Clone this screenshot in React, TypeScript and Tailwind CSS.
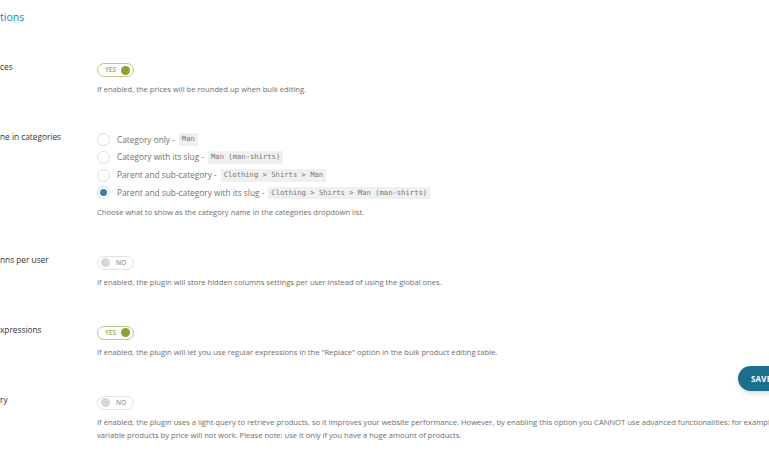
import React from 'react';

const font = { fontFamily: '"Open Sans", "Noto Sans", sans-serif' };

const Toggle: React.FC<{ on: boolean }> = ({ on }) =>
  on ? (
    <div className="flex h-[14px] w-[37px] items-center justify-between rounded-full border border-[#b9c98a] pl-[7px] pr-[3px]">
      <span className="text-[6.5px] font-semibold leading-none text-[#93a94a]">YES</span>
      <span className="h-[9px] w-[9px] rounded-full bg-[#8aa232]" />
    </div>
  ) : (
    <div className="flex h-[14px] w-[37px] items-center gap-[6px] rounded-full border border-[#e2e2e2] pl-[3px]">
      <span className="h-[9px] w-[9px] rounded-full bg-[#d6d6d6]" />
      <span className="text-[6.5px] font-semibold leading-none text-[#9a9a9a]">NO</span>
    </div>
  );

const Desc: React.FC<{ className?: string; children: React.ReactNode }> = ({ className, children }) => (
  <p className={`whitespace-nowrap text-[7.6px] leading-[13px] text-[#6d6d6d] ${className ?? 'mt-[6px]'}`}>{children}</p>
);

const Code: React.FC<{ children: React.ReactNode }> = ({ children }) => (
  <code className="ml-[4px] bg-[#f0f0f0] px-[3px] py-[1px] font-['DejaVu_Sans_Mono',monospace] text-[7.2px] text-[#777]">
    {children}
  </code>
);

const Radio: React.FC<{ checked?: boolean; label: string; code: string }> = ({ checked, label, code }) => (
  <div className="flex h-[17.7px] items-center">
    <span
      className={
        checked
          ? 'flex h-[13px] w-[13px] items-center justify-center rounded-full border border-[#d8d8d8] bg-white'
          : 'h-[13px] w-[13px] rounded-full border border-[#dcdcdc] bg-white'
      }
    >
      {checked && <span className="h-[7px] w-[7px] rounded-full bg-[#3a7ea0]" />}
    </span>
    <span className="ml-[7px] text-[8.3px] text-[#707070]">{label} -</span>
    <Code>{code}</Code>
  </div>
);

const Row: React.FC<{ label: string; className?: string; children: React.ReactNode }> = ({ label, className, children }) => (
  <div className={`flex ${className ?? ''}`}>
    <div className="w-[97px] shrink-0 -mt-[3px] text-[8.3px] leading-[14px] text-[#333]">{label}</div>
    <div className="flex flex-col">{children}</div>
  </div>
);

export default function App() {
  return (
    <div className="relative h-[452px] w-[769px] overflow-hidden bg-white" style={font}>
      <h2 className="pt-[10px] text-[10.5px] leading-[14px] text-[#1b85b8]">tions</h2>

      <Row label="ces" className="mt-[39px]">
        <Toggle on />
        <Desc>If enabled, the prices will be rounded up when bulk editing.</Desc>
      </Row>

      <Row label="ne in categories" className="mt-[37px]">
        <div className="-mt-[2px] flex flex-col">
          <Radio label="Category only" code="Man" />
          <Radio label="Category with its slug" code="Man (man-shirts)" />
          <Radio label="Parent and sub-category" code="Clothing > Shirts > Man" />
          <Radio checked label="Parent and sub-category with its slug" code="Clothing > Shirts > Man (man-shirts)" />
        </div>
        <Desc className="mt-[4px]">Choose what to show as the category name in the categories dropdown list.</Desc>
      </Row>

      <Row label="nns per user" className="mt-[37px]">
        <Toggle on={false} />
        <Desc>If enabled, the plugin will store hidden columns settings per user instead of using the global ones.</Desc>
      </Row>

      <Row label="xpressions" className="mt-[37px]">
        <Toggle on />
        <Desc>If enabled, the plugin will let you use regular expressions in the "Replace" option in the bulk product editing table.</Desc>
      </Row>

      <Row label="ry" className="mt-[37px]">
        <Toggle on={false} />
        <Desc>
          If enabled, the plugin uses a light query to retrieve products, so it improves your website performance. However, by enabling this option you CANNOT use advanced functionalities: for example, filtering
          <br />
          variable products by price will not work. Please note: use it only if you have a huge amount of products.
        </Desc>
      </Row>

      <button className="absolute left-[738px] top-[366px] flex h-[25px] w-[60px] items-center rounded-full bg-[#1c6e8e] pl-[13px] text-[8px] font-bold tracking-wide text-white shadow-md">
        SAVE
      </button>
    </div>
  );
}
